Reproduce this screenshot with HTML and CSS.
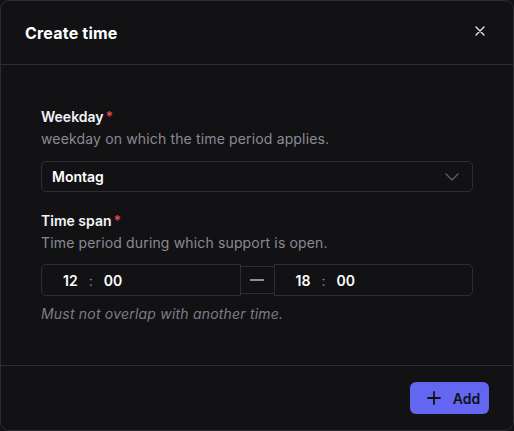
FILE: index.html
```html
<!DOCTYPE html>
<html lang="en">
<head>
  <meta charset="UTF-8">
  <meta name="viewport" content="width=device-width, initial-scale=1.0">
  <title>Create time</title>
  <link rel="stylesheet" href="styles.css">
</head>
<body>
  <div class="modal">
    <div class="modal-header">
      <h2>Create time</h2>
      <button class="close-btn" type="button" aria-label="Close">
        <svg width="10" height="10" viewBox="0 0 10 10"><path d="M1 1L9 9M9 1L1 9" stroke="#e6e6ea" stroke-width="1.4" stroke-linecap="round"/></svg>
      </button>
    </div>

    <div class="modal-body">
      <div class="form-group">
        <label>Weekday<span class="req">*</span></label>
        <p class="desc">weekday on which the time period applies.</p>
        <div class="select">
          <span>Montag</span>
          <svg width="14" height="8" viewBox="0 0 14 8"><path d="M1 1L7 7L13 1" fill="none" stroke="#5c5c66" stroke-width="1.4" stroke-linecap="round" stroke-linejoin="round"/></svg>
        </div>
      </div>

      <div class="form-group">
        <label>Time span<span class="req">*</span></label>
        <p class="desc">Time period during which support is open.</p>
        <div class="time-range">
          <div class="time-input">
            <span>12</span><span class="colon">:</span><span>00</span>
          </div>
          <div class="time-sep"><i></i></div>
          <div class="time-input">
            <span>18</span><span class="colon">:</span><span>00</span>
          </div>
        </div>
        <p class="hint">Must not overlap with another time.</p>
      </div>
    </div>

    <div class="modal-footer">
      <button class="add-btn" type="button">
        <svg width="14" height="14" viewBox="0 0 14 14"><path d="M7 1V13M1 7H13" stroke="#111114" stroke-width="1.8" stroke-linecap="round"/></svg>
        Add
      </button>
    </div>
  </div>
</body>
</html>
```

FILE: styles.css
```css
html, body {
  margin: 0;
  background-color: #121215;
}
body {
  font-family: 'Inter', 'Noto Sans', sans-serif;
  color: #f2f2f5;
}
.modal {
  box-sizing: border-box;
  width: 514px;
  height: 431px;
  background-color: #121215;
  border: 1px solid #2c2c31;
  border-radius: 9px;
  display: flex;
  flex-direction: column;
}
.modal-header {
  height: 63px;
  border-bottom: 1px solid #2c2c31;
  display: flex;
  align-items: center;
  justify-content: space-between;
  padding: 0 24px;
}
.modal-header h2 {
  margin: 0;
  font-size: 16px;
  font-weight: 700;
  color: #ffffff;
  letter-spacing: 0.2px;
}
.close-btn {
  background: none;
  border: none;
  padding: 0;
  margin-right: 4px;
  margin-bottom: 4px;
  display: flex;
  cursor: pointer;
}
.modal-body {
  flex: 1;
  padding: 43px 40px 0 40px;
}
.form-group {
  margin-bottom: 20px;
}
label {
  display: block;
  font-size: 14px;
  font-weight: 600;
  color: #f4f4f6;
  line-height: 18px;
}
.req {
  color: #e5484d;
  margin-left: 2px;
}
.desc {
  margin: 3px 0 12px 0;
  font-size: 14px;
  color: #8a8a94;
  line-height: 20px;
  letter-spacing: 0.15px;
}
.select {
  height: 31px;
  box-sizing: border-box;
  border: 1px solid #2e2e34;
  border-radius: 5px;
  display: flex;
  align-items: center;
  justify-content: space-between;
  padding: 0 13px 0 10px;
  font-size: 14px;
  font-weight: 600;
  color: #ffffff;
}
.time-range {
  display: flex;
  align-items: center;
  margin-top: -1px;
}
.time-input {
  flex: 1;
  height: 32px;
  box-sizing: border-box;
  border: 1px solid #2e2e34;
  border-radius: 5px;
  display: flex;
  align-items: center;
  gap: 11px;
  padding-left: 21px;
  font-size: 14px;
  font-weight: 600;
  color: #ffffff;
}
.time-input:first-child {
  border-top-right-radius: 0;
  border-bottom-right-radius: 0;
}
.time-input:last-child {
  border-top-left-radius: 0;
  border-bottom-left-radius: 0;
}
.colon {
  color: #8a8a94;
  font-weight: 400;
}
.time-sep {
  width: 33px;
  height: 28px;
  box-sizing: border-box;
  border-top: 1px solid #2e2e34;
  border-bottom: 1px solid #2e2e34;
  display: flex;
  align-items: center;
  justify-content: center;
}
.time-sep i {
  display: block;
  width: 14px;
  height: 2px;
  background-color: #8f8f98;
}
.hint {
  margin: 9px 0 0 0;
  font-size: 14px;
  font-style: italic;
  color: #7c7c86;
  letter-spacing: 0.2px;
}
.modal-footer {
  height: 65px;
  border-top: 1px solid #2c2c31;
  display: flex;
  align-items: flex-start;
  justify-content: flex-end;
  padding: 16px 24px 0 0;
  box-sizing: border-box;
}
.add-btn {
  width: 79px;
  height: 32px;
  background-color: #6366f1;
  border: none;
  border-radius: 6px;
  display: flex;
  align-items: center;
  justify-content: center;
  gap: 12px;
  padding: 0 0 0 8px;
  font-family: inherit;
  font-size: 14px;
  font-weight: 600;
  color: #111114;
  cursor: pointer;
}
```
